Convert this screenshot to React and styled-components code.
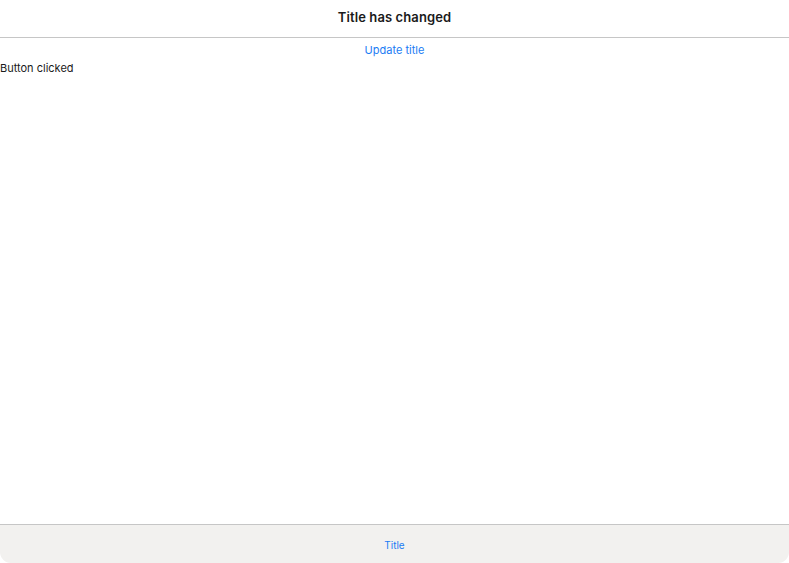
import React, { useState } from "react";
import styled, { createGlobalStyle } from "styled-components";

const GlobalStyle = createGlobalStyle`
  html, body {
    margin: 0;
    padding: 0;
    background: #ffffff;
  }
  body {
    font-family: Inter, "Liberation Sans", sans-serif;
    -webkit-font-smoothing: antialiased;
  }
`;

const Window = styled.div`
  width: 789px;
  height: 563px;
  display: flex;
  flex-direction: column;
  background: #ffffff;
  border-radius: 0 0 11px 11px;
  overflow: hidden;
  box-sizing: border-box;
`;

const NavBar = styled.div`
  height: 38px;
  flex: 0 0 auto;
  display: flex;
  align-items: center;
  justify-content: center;
  padding-bottom: 3px;
  box-sizing: border-box;
  border-bottom: 1px solid #c6c6c6;
`;

const NavTitle = styled.h1`
  margin: 0;
  font-size: 13px;
  font-weight: 600;
  color: #1a1a1a;
  letter-spacing: 0.1px;
`;

const Content = styled.div`
  flex: 1;
  display: flex;
  flex-direction: column;
`;

const LinkButton = styled.button`
  align-self: center;
  background: none;
  border: none;
  padding: 0;
  margin-top: 4px;
  height: 16px;
  font-family: inherit;
  font-size: 11px;
  color: #1c7cf4;
  cursor: pointer;
`;

const Message = styled.div`
  margin-top: 2px;
  font-size: 11px;
  color: #1a1a1a;
  line-height: 16px;
`;

const TabBar = styled.div`
  height: 38px;
  flex: 0 0 auto;
  display: flex;
  align-items: center;
  justify-content: center;
  background: #f2f1ef;
  border-top: 1px solid #c6c6c6;
`;

const TabItem = styled.span`
  font-size: 10px;
  color: #1c7cf4;
  margin-top: 2px;
`;

const App = () => {
  const [title, setTitle] = useState("Title has changed");
  const [clicked, setClicked] = useState(true);

  return (
    <>
      <GlobalStyle />
      <Window>
        <NavBar>
          <NavTitle>{title}</NavTitle>
        </NavBar>
        <Content>
          <LinkButton
            onClick={() => {
              setTitle("Title has changed");
              setClicked(true);
            }}
          >
            Update title
          </LinkButton>
          {clicked && <Message>Button clicked</Message>}
        </Content>
        <TabBar>
          <TabItem>Title</TabItem>
        </TabBar>
      </Window>
    </>
  );
};

export default App;
